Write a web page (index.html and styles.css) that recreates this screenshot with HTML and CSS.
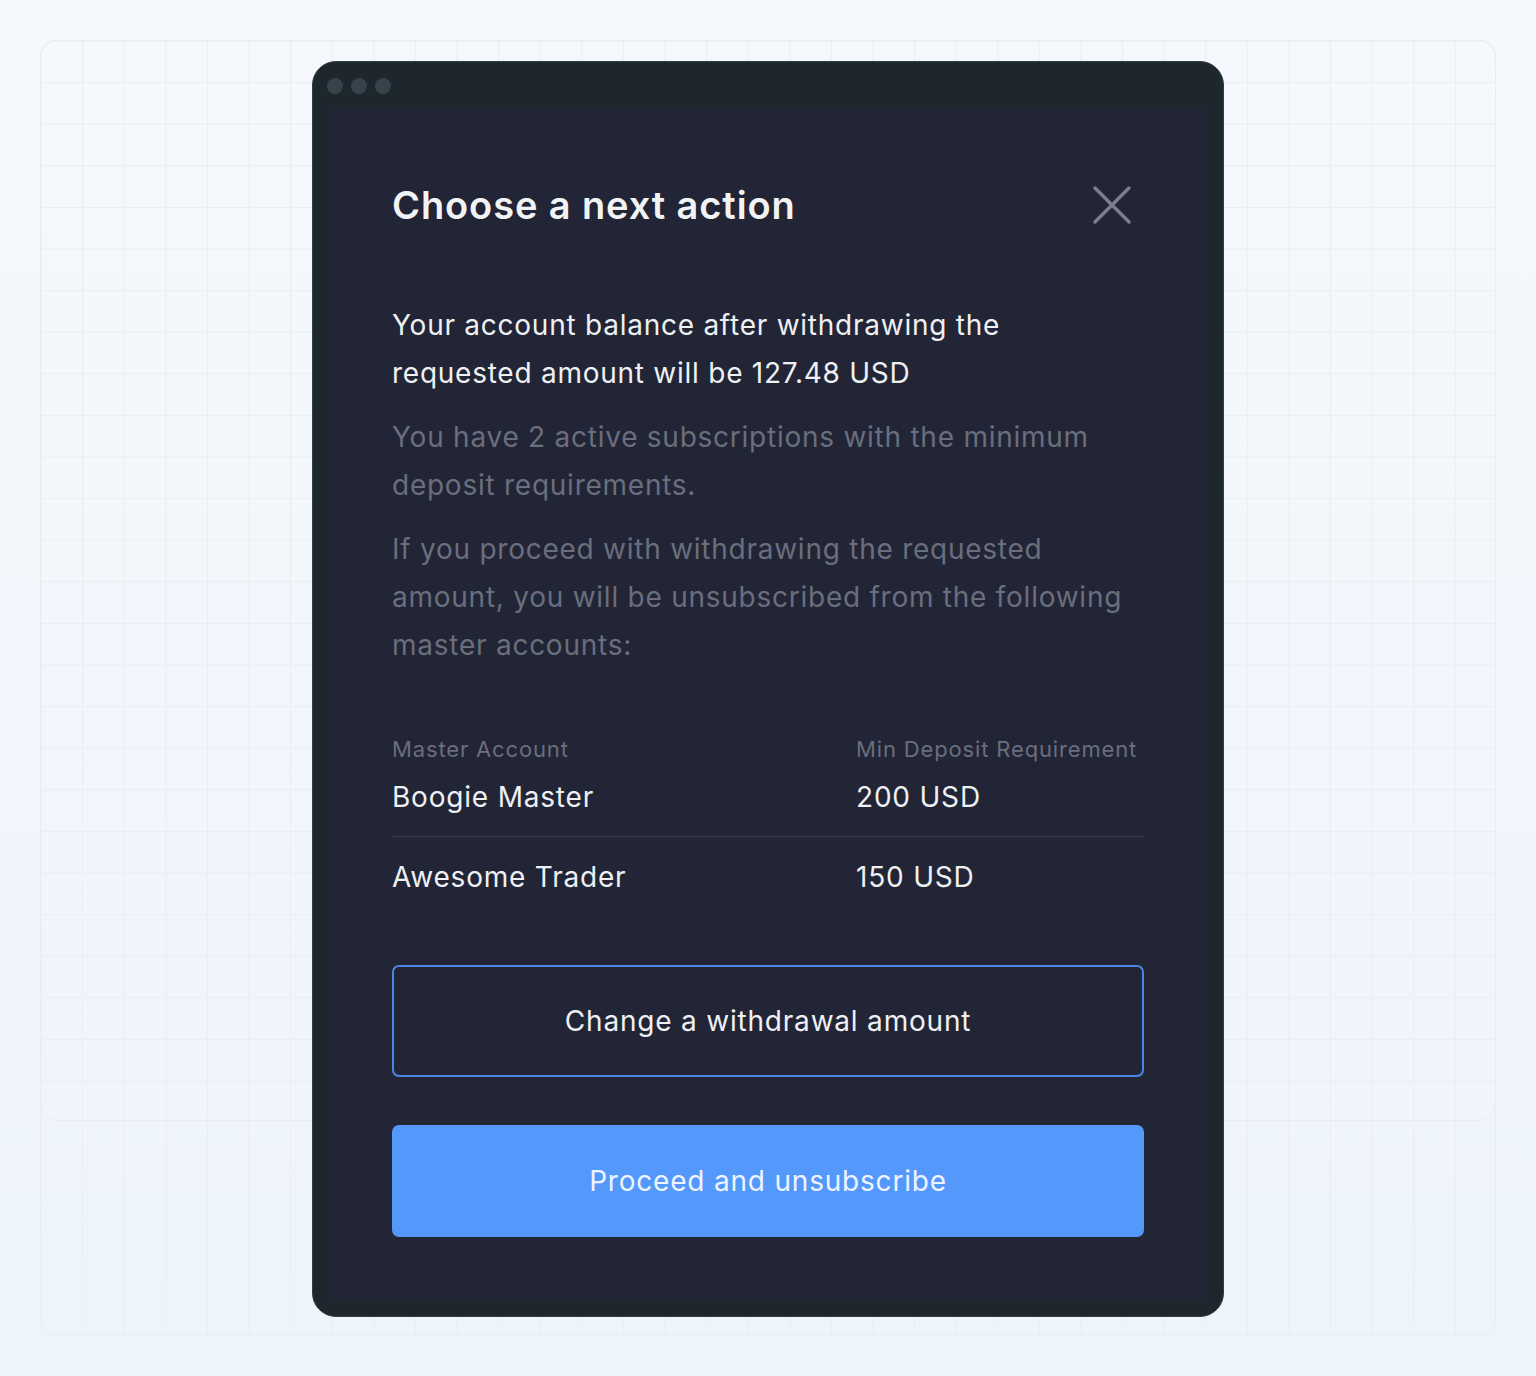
FILE: index.html
```html
<!DOCTYPE html>
<html lang="en">
<head>
<meta charset="utf-8">
<title>Choose a next action</title>
<link rel="stylesheet" href="styles.css">
</head>
<body>
<div class="stage">
  <div class="grid-top"></div>
  <div class="window">
    <div class="titlebar">
      <span class="dot"></span><span class="dot"></span><span class="dot"></span>
    </div>
    <div class="modal">
      <div class="modal-header">
        <h1 class="modal-title">Choose a next action</h1>
        <button class="close" aria-label="Close">
          <svg width="38" height="38" viewBox="0 0 38 38"><path d="M2 2 L36 36 M36 2 L2 36" stroke="#7b7e8b" stroke-width="3.4" stroke-linecap="round" fill="none"/></svg>
        </button>
      </div>
      <div class="modal-body">
        <p class="lead">Your account balance after withdrawing the requested amount will be 127.48 USD</p>
        <p class="muted">You have 2 active subscriptions with the minimum deposit requirements.</p>
        <p class="muted">If you proceed with withdrawing the requested amount, you will be unsubscribed from the following master accounts:</p>
      </div>
      <div class="table">
        <div class="row head">
          <span>Master Account</span>
          <span>Min Deposit Requirement</span>
        </div>
        <div class="row item first">
          <span>Boogie Master</span>
          <span>200 USD</span>
        </div>
        <div class="row item">
          <span>Awesome Trader</span>
          <span>150 USD</span>
        </div>
      </div>
      <div class="actions">
        <button class="btn btn-outline">Change a withdrawal amount</button>
        <button class="btn btn-primary">Proceed and unsubscribe</button>
      </div>
    </div>
  </div>
</div>
</body>
</html>
```

FILE: styles.css
```css
* { box-sizing: border-box; }

html, body { margin: 0; padding: 0; }

body {
  width: 1536px;
  height: 1376px;
  padding: 40px;
  background: linear-gradient(180deg, #f5f9fd 0%, #eef4fb 100%);
  font-family: Inter, "Noto Sans", "Liberation Sans", sans-serif;
  overflow: hidden;
}

.stage {
  position: relative;
  width: 1456px;
  height: 1295px;
  border: 1px solid #e8edf2;
  border-radius: 16px;
  padding-top: 20px;
  display: flex;
  justify-content: center;
  align-items: flex-start;
  background-image: linear-gradient(to right, transparent calc(100% - 1px), #e9eef3 0);
  background-size: 41.6px 100%;
  background-position: 0.6px 0;
}

.grid-top {
  position: absolute;
  top: -1px;
  left: -1px;
  right: -1px;
  height: 1081px;
  border: 1px solid #e8edf2;
  border-radius: 16px;
  background-image: linear-gradient(to bottom, transparent calc(100% - 1px), #e9eef3 0);
  background-size: 100% 41.6px;
  background-position: 0 0.6px;
}

.window {
  position: relative;
  width: 912px;
  background: #1f272e;
  border: 1px solid #323d46;
  border-radius: 24px;
  padding: 0 15px 16px;
}

.titlebar {
  height: 47px;
  display: flex;
  align-items: center;
  gap: 8px;
  margin-left: -1px;
}

.dot {
  width: 16px;
  height: 16px;
  border-radius: 50%;
  background: #36434a;
}

.modal {
  background: #222535;
  border-radius: 4px;
  padding: 72px 64px 63px;
}

.modal-header {
  display: flex;
  align-items: center;
  justify-content: space-between;
  height: 48px;
}

.modal-title {
  margin: 0;
  font-size: 38px;
  font-weight: 600;
  color: #f2f3f5;
  letter-spacing: 0.9px;
  line-height: 48px;
}

.close {
  border: 0;
  background: transparent;
  padding: 0;
  margin-right: 13px;
  width: 38px;
  height: 38px;
  display: block;
}

.close svg { display: block; }

.modal-body {
  margin-top: 72px;
  display: flex;
  flex-direction: column;
  gap: 16px;
}

.modal-body p {
  margin: 0;
  font-size: 28px;
  line-height: 48px;
  letter-spacing: 0.75px;
}

.lead { color: #eef0f3; }
.muted { color: #6a6e7d; }

.table {
  margin-top: 64px;
}

.row {
  display: grid;
  grid-template-columns: 464px 1fr;
}

.row.head {
  font-size: 22px;
  line-height: 32px;
  color: #6a6e7d;
  letter-spacing: 0.85px;
  margin-bottom: 8px;
}

.row.item {
  font-size: 28px;
  line-height: 48px;
  color: #eef0f3;
  letter-spacing: 0.8px;
}

.row.item.first {
  padding-bottom: 15px;
  border-bottom: 1px solid #3b3e50;
  margin-bottom: 16px;
}

.actions {
  margin-top: 64px;
  display: flex;
  flex-direction: column;
  gap: 48px;
}

.btn {
  display: block;
  width: 100%;
  height: 112px;
  border-radius: 7px;
  font-family: inherit;
  font-size: 28px;
  letter-spacing: 0.8px;
  cursor: pointer;
}

.btn-outline {
  background: transparent;
  border: 2px solid #4c86e2;
  color: #eef0f3;
}

.btn-primary {
  background: #5498fb;
  border: 0;
  color: #eef4ff;
}
```
